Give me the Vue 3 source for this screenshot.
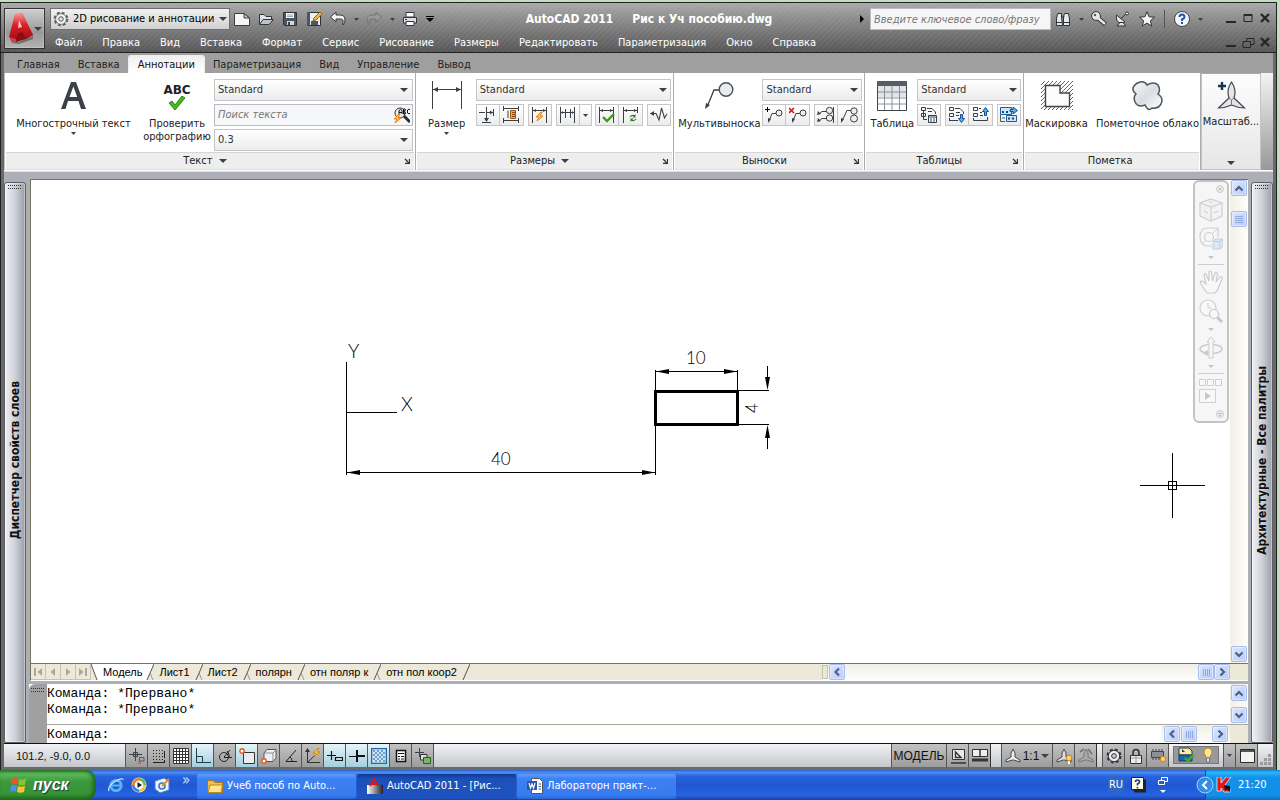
<script setup>
import { h, ref } from 'vue'

const D = '#3b3f46'
const line = (d, c = D, w = 1) => `<path d="${d}" fill="none" stroke="${c}" stroke-width="${w}"/>`
const fill = (d, f, s = 'none', w = 1) => `<path d="${d}" fill="${f}" stroke="${s}" stroke-width="${w}"/>`
const bolt = (x, y) => `<path transform="translate(${x} ${y})" d="M5 0L0 5H3L1 9L7 4H4L6 0Z" fill="#ffd23a" stroke="#e0761c" stroke-width=".9"/>`
const trefoil = 'M8 1L10 5V9L15 12V14L8.500 12H7.500L1 14V12L6 9V5Z'
const gear = '<circle cx="8" cy="8" r="6.200" fill="none" stroke="#33373d" stroke-width="2.600" stroke-dasharray="2.900 1.970"/><circle cx="8" cy="8" r="5.600" fill="#f1f1f1" stroke="#33373d"/><circle cx="8" cy="8" r="2.400" fill="#c9c9c9" stroke="#33373d"/>'

const icons = {
  logo: '<defs><linearGradient id="lg" x1="0" y1="0" x2="0" y2="1"><stop offset="0" stop-color="#f7989a"/><stop offset=".45" stop-color="#e01f26"/><stop offset="1" stop-color="#a50d14"/></linearGradient></defs>' +
    '<path d="M1 27L9 30L24 24V27L10 32L3 31Z" fill="#444" opacity=".55"/><path d="M1 25L6 3L13 1L24 23L17 27L7 30L1 27Z" fill="#8d0d13"/><path d="M0 25L6 2L13 1L24 23L16 26L14 20L9 21L7 27Z" fill="url(#lg)"/><path d="M10 8L13 15L9 16Z" fill="#f3c9ca"/><path d="M0 25L7 27L7 30L2 28Z" fill="#e8383e"/>',
  gearw: '<circle cx="8" cy="8" r="6.300" fill="none" stroke="#5b5f65" stroke-width="2.200" stroke-dasharray="2.800 2.150"/><circle cx="8" cy="8" r="5.400" fill="#f2f2f2" stroke="#5b5f65" stroke-width=".8"/><circle cx="8" cy="8" r="2.300" fill="#ddd" stroke="#5b5f65"/>',
  gear,
  page: fill('M.5 2.500H10L15.500 7V14.500H.5Z', '#f6f7f9', '#3a3d43') + fill('M10 2.500V7H15.500Z', '#c6cbd2', '#3a3d43'),
  open: fill('M1.500 13V3.500H6L8 5.500H13.500V8', '#dfe2e6', '#32363c') + fill('M1.500 13.500L5 8.500H15.500L11 13.500Z', '#bdc3cb', '#32363c'),
  save: fill('M1.500 1.500H14.500V14.500H2.500L1.500 13.500Z', '#4c5561', '#2d3138') + fill('M4 2H12V7H4Z', '#f4f6f8') + line('M5 4H11M5 5.500H11', '#9aa') + fill('M5 10H12V14H5Z', '#d3d8de') + fill('M6 11H8V14H6Z', '#39404a'),
  saveas: fill('M1.500 1.500H14.500V14.500H2.500L1.500 13.500Z', '#eceef1', '#2d3138') + fill('M1 1H4V15H1Z', '#4c5561') + fill('M5 10H12V14H5Z', '#4c5561') + fill('M7 10L8 7L14 1L16 3L10 9Z', '#f6b73c', '#9a6216'),
  undo: fill('M.5 6L6 1V4H10Q15 4 15 9Q15 12 13 14V9Q12 8 10 8H6V11Z', '#f0f1f3', '#34383e'),
  redo: fill('M15.500 6L10 1V4H6Q1 4 1 9Q1 12 3 14V9Q4 8 6 8H10V11Z', '#9a9a9a', '#747474'),
  print: fill('M4 1.500H12V6H4Z', '#fff', '#33373d') + fill('M1.500 6.500H14.500V12H1.500Z', '#dcdfe3', '#33373d') + fill('M4 10.500H12V14.500H4Z', '#fff', '#33373d') + line('M3 8.500H5', '#333'),
  binoc: fill('M2.500 2.500H6.500V6L7.500 14.500H1.500V8Z', '#e6e9ec', '#30343a') + fill('M9.500 2.500H13.500L14.500 8V14.500H8.500V6Z', '#e6e9ec', '#30343a') + line('M1.500 11.500H7M9 11.500H14.500M6.500 6H9.500', '#30343a'),
  key: line('M7 7L14.500 13.500', '#2e3238', 4.500) + '<circle cx="5" cy="5" r="4.400" fill="#e5e8eb" stroke="#2e3238"/><circle cx="4" cy="4" r="1.200" fill="#555"/>' + line('M7 7L14 13', '#e5e8eb', 2.500),
  dish: fill('M1.500 4L10 11Q4 13.500 2 9.500Q1 7 1.500 4Z', '#e5e8eb', '#2e3238') + line('M6 7.500L12 2', '#2e3238') + '<circle cx="12" cy="2.500" r="1.500" fill="#fff" stroke="#2e3238"/>' + fill('M5 11.500L8 11.500L11 15H2Z', '#ddd', '#2e3238'),
  star: fill('M8 .7L10.100 5.800L15.500 6.200L11.400 9.700L12.700 15L8 12.100L3.300 15L4.600 9.700L.5 6.200L5.900 5.800Z', '#f3f4f6', '#2c3036'),
  help: '<circle cx="8" cy="8" r="7.500" fill="#f4f6fa" stroke="#40444a"/>' + line('M5.500 6Q5.500 3.500 8 3.500Q10.500 3.500 10.500 6Q10.500 7.500 8 8.500V10', '#2555b0', 2) + fill('M7 11H9V13H7Z', '#2555b0'),
  min: line('M2 10H12', '#24272b', 2),
  max: line('M3 2.500H11V9.500H3ZM3 3.500H11', '#24272b'),
  restore: line('M5.500 5V2.500H13V8.500H9.500M2 5.500H9.500V11.500H2Z', '#24272b'),
  close: line('M3 2L11 10M11 2L3 10', '#24272b', 2.400),
  drop: fill('M0 0H8L4 4Z', D),
  dropS: fill('M0 0H5L2.500 3Z', D),
  bigA: fill('M1 28L11 1H16L26 28H21L18.500 20H8L5.500 28ZM9.500 16H17.200L13.400 5.500Z', '#3c4047').replace('<path', '<path fill-rule="evenodd"'),
  check: fill('M1 7L4 5L7 9L14 0L17 2L7 14Z', '#45b91b', '#2b8a10'),
  find: '<circle cx="6" cy="6" r="5" fill="#e6eef2" stroke="#333"/>' + line('M10 9L16 15', '#2a2a2a', 3) + line('M5 7V3.500L6.500 2.500L8 3.500V7M5 5.500H8M9.500 2V7H11L11.500 6L10.500 4.500L11.500 3L11 2ZM16 3L15 2L13.500 3V6L15 7L16 6', '#111') + bolt(0, 7),
  launch: line('M1 1L5 5M5.500 1V5.500H1', '#333', 1.400),
  dimBig: line('M1.500 0V28M30.500 0V28M2 8.500H30') + fill('M2 8.500L7 6V11ZM30 8.500L25 6V11Z', D),
  dimA: line('M0 6.500H6M7.500 1V15M8 6.500H14M14.500 3V10M3 16.500H12') + fill('M7.500 16L5 12H10ZM14 6.500L11 4.500V8.500Z', D),
  dimB: line('M1.500 0V5M16.500 0V5M1.500 12V17M16.500 12V17M2 2.500H16M2 14.500H16M6 4.500V12') + fill('M8.500 4.500H13.500V12.500H8.500Z', '#f3b21b', '#a15a0d') + line('M10 6.500H13M10 8.500H13M10 10.500H13', '#8b4507'),
  dimC: line('M1.500 1V17M15.500 1V17M2 4.500H15') + fill('M2 4.500L5 3V6ZM15 4.500L12 3V6Z', D) + bolt(5, 6),
  dimD: line('M1.500 1V17M6.500 3V12M11.500 3V12M15.500 1V17M2 6.500H15') + fill('M2 6.500L4 5V8ZM15 6.500L13 5V8Z', D),
  dimE: line('M1.500 1V17M15.500 1V17M2 4.500H15') + fill('M2 4.500L5 3V6ZM15 4.500L12 3V6Z', D) + line('M5 11L9 15L16 8', '#3a9b1f', 2.400),
  dimF: line('M1.500 1V17M15.500 1V7M2 4.500H15') + fill('M2 4.500L5 3V6ZM15 4.500L12 3V6Z', D) + line('M8 11Q10 8.500 13 10M14 13Q12 15.500 9 14', '#2e7d24', 1.200) + fill('M13.500 8V11.500H10.500ZM8.500 16V12.500H11.500Z', '#2e7d24'),
  jog: line('M0 7.500H6L9 14L11.500 2L14.500 12L17 8', D, 1.100) + fill('M0 7.500L4 5V10Z', D),
  leadBig: line('M3 26L10 9H17', D, 1.300) + fill('M1 28L2 22L6 24Z', D) + '<circle cx="22" cy="8.500" r="6.800" fill="#e8eaec" stroke="#4c5056" stroke-width="1.400"/>',
  leadAdd: line('M4 15L7 7.500H11') + fill('M3 17L3 12L6 13Z', D) + '<circle cx="14" cy="7" r="3" fill="#eee" stroke="#3b3f46"/>' + line('M0 3.500H5M2.500 1V6', '#000'),
  leadDel: line('M4 15L7 7.500H11') + fill('M3 17L3 12L6 13Z', D) + '<circle cx="14" cy="7" r="3" fill="#eee" stroke="#3b3f46"/>' + line('M0 2L5 7M5 2L0 7', '#d5161b', 1.600),
  leadAl: line('M2 8L5 5.500H9M2 15L5 12.500H9M16.500 1V17') + fill('M0 9L1 5L4 8ZM0 16L1 12L4 15Z', D) + '<circle cx="12.500" cy="4.500" r="3.200" fill="#eee" stroke="#3b3f46"/><circle cx="12.500" cy="12" r="3.200" fill="#eee" stroke="#3b3f46"/>',
  leadCol: line('M1 15L6 4.500H10') + fill('M0 17L0 12L3 13Z', D) + '<circle cx="13" cy="5" r="3.200" fill="#eee" stroke="#3b3f46"/><circle cx="13" cy="12.500" r="3.500" fill="#eee" stroke="#3b3f46"/>',
  table: fill('M.5 .5H29.500V29.500H.5Z', '#fff', '#41464e') + fill('M1 5H29V16H1Z', '#e1e4e8') + fill('M0 0H30V5H0Z', '#555d69') + line('M7.500 5V29M15 5V29M22.500 5V29M1 11H29M1 17H29M1 23H29', '#8c9096'),
  tabA: line('M1.500 1.500H5.500V4.500H1.500ZM3.500 4.500V13.500H7M1.500 7.500H5.500V10.500H1.500ZM7 2.500H12L15.500 6V8M8 5.500H12', '#33404d') + fill('M8.500 9.500H16.500V16.500H8.500Z', '#fff', '#33404d') + line('M9 11H16M10 13H12M13 13H15M10 15H12M13 15H15', '#33404d'),
  tabB: line('M1.500 1.500H5.500V4.500H1.500ZM1.500 7.500H5.500V10.500H1.500ZM7 2.500H12L15.500 6V8M1.500 14.500H10M8 6.500H12M8 9.500H11M1.500 12V15', '#33404d') + fill('M12.500 8.500H14.500V12.500H16.500L13.500 16.500L10.500 12.500H12.500Z', '#58b0ee', '#0f4f91'),
  tabC: line('M1.500 1.500H5.500V4.500H1.500ZM1.500 7.500H5.500V10.500H1.500ZM7 2.500H9M15.500 11V14.500H1.500V12M8 6.500H10M8 9.500H11', '#33404d') + fill('M12.500 9.500H14.500V5.500H16.500L13.500 1.500L10.500 5.500H12.500Z', '#58b0ee', '#0f4f91'),
  tabD: fill('M.5 1.500H11.500V8.500H.5Z', '#cfe4f6', '#1d5f9d') + fill('M10 3.500H13V1L17.500 4.500L13 8V5.500H10Z', '#58b0ee', '#0f4f91') + line('M.5 9V15.500H5M2 12H5', '#555') + fill('M6.500 9.500H16.500V15.500H6.500Z', '#cfe4f6', '#1d5f9d') + line('M2 6H4M6 6H8M8 12.500H10M12 12.500H14', '#0b4a8a', 2),
  mask: '<defs><pattern id="ht" width="4" height="4" patternUnits="userSpaceOnUse"><path d="M-1 5L5 -1" stroke="#666" stroke-width="1"/></pattern></defs><path d="M0 0H32V29H0Z" fill="url(#ht)"/>' + fill('M4.500 4.500H19V12H28.500V25.500H4.500Z', '#fdfdfe', '#42464d', 1.400),
  cloud: '<defs><linearGradient id="cg" x1="0" y1="0" x2="1" y2="1"><stop offset="0" stop-color="#f5f6f8"/><stop offset=".5" stop-color="#d9dde2"/><stop offset="1" stop-color="#fff"/></linearGradient></defs>' + fill('M8 1Q13 0 15 4Q22 0 26 4Q29 9 26 13Q32 17 29 23Q26 28 20 27Q16 31 13 24Q6 27 3 21Q1 16 4 13Q-1 9 2 5Q4 2 8 1Z', 'url(#cg)', '#50545b', 1.500),
  scale: fill('M14.500 2Q20 10 17 18L27.500 28Q21 28 14.500 25Q8 28 1.500 28L12 18Q9 10 14.500 2Z', '#e3e6e9', '#44484e', 1.200) + line('M12 18L14.500 20L17 18M14.500 20V25', '#777') + line('M1 6H9M5 2V10', '#123458', 2.400),
  cross: line('M0 6.500H13M6.500 0V13') + fill('M4.500 4.500H8.500V8.500H4.500Z', 'none', D) + line('M10.500 9V16M11 9.500H15V13H11', '#2b65a5') + '<circle cx="10.500" cy="15" r="1.500" fill="#d63"/>',
  snap: line('M2 2.500H12M2 5.500H12M2 8.500H12M2 11.500H12', '#222', 1).replace('<path', '<path stroke-dasharray="1 2"') + line('M13.500 3V10M2 14.500H14M13.500 12V14', '#222'),
  grid: fill('M0 0H16V16H0Z', '#fff') + line('M.5 .5H15.500V15.500H.5ZM3.500 0V16M6.500 0V16M9.500 0V16M12.500 0V16M0 3.500H16M0 6.500H16M0 9.500H16M0 12.500H16', '#333'),
  ortho: line('M1.500 0V14.500H16M1.500 8.500H7.500V14', '#1e3c50'),
  polar: '<circle cx="7" cy="9" r="4.500" fill="none" stroke="#222"/>' + line('M7 9.500H15M7 9L13 2M10 3Q13 6 12 10', '#222'),
  osnap: fill('M4.500 4.500H15.500V15.500H4.500Z', '#e9edf1', '#333') + '<circle cx="3" cy="3" r="2.200" fill="#fff" stroke="#e0571a" stroke-width="1.400"/>',
  osnap3: fill('M3 5L6 1.500H15V10L12 13.500H3Z', '#eff0f3', '#50545c') + line('M3 5H12V13M12 5L15 2', '#8a8e96') + '<circle cx="3" cy="13" r="2.200" fill="#fff" stroke="#e0571a" stroke-width="1.400"/>',
  angle: line('M13 2L3 13.500H14M7 9Q9 10 9 13', '#222'),
  ducs: line('M2.500 2V14.500H15M2.500 14.500L9 8', '#333') + fill('M0 4L2.500 0L5 4Z', '#333') + bolt(8, 0),
  dyn: line('M0 7.500H9M4.500 3V12M8.500 9.500H15.500V12.500H8.500Z', '#111', 1.200),
  lwt: line('M0 8.500H8', '#111', 1) + line('M8 8H16M8 2V14', '#111', 2),
  transp: fill('M.5 .5H15.500V15.500H.5Z', '#cfe3f3', '#2768a4', 1.500) + line('M2 3H14M2 7H14M2 11H14', '#6ba3cd', 2).replace('<path', '<path stroke-dasharray="2 2"') + line('M4 5H14M4 9H14M4 13H14', '#6ba3cd', 2).replace('<path', '<path stroke-dasharray="2 2"'),
  qp: fill('M3.500 2.500H12.500V13.500H3.500Z', '#fff', '#111', 1.500) + line('M5 5.500H11M5 8.500H7M8 8.500H11M5 11H7M8 11H11', '#111'),
  selcyc: line('M0 4.500H9M4.500 0V9') + fill('M5.500 6.500H12V12H5.500Z', '#ddd', '#333') + fill('M8.500 9.500H15.500V15.500H8.500Z', '#79b567', '#2c5e22'),
  model: fill('M2.500 1.500H14.500V11.500H2.500Z', '#e9e9e9', '#333') + line('M5.500 4V9.500H11ZM1 15H16', '#333', 1.400),
  layout: fill('M.5 1.500H8V8.500H.5ZM8 1.500H15.500V8.500H8Z', '#eee', '#333') + line('M0 12H16', '#333', 3),
  tre: fill(trefoil, '#e9eaec', '#44484d'),
  treb: fill(trefoil, '#dcdde0', '#44484d') + '<circle cx="13" cy="10" r="2.800" fill="#ffd76a" stroke="#dd7a16"/><path d="M12 13H14V16H12Z" fill="#fff"/>',
  treg: fill(trefoil, '#a9a9a9', '#777') + line('M2 4L6 1M10 1L14 6', '#777', 2),
  lock: line('M5 8V5Q5 1.500 8 1.500Q11 1.500 11 5V8', '#2f3338', 1.600) + fill('M2.500 7.500H13.500V15.500H2.500Z', '#eceded', '#2f3338') + line('M3 10H13M8 8V15', '#999'),
  chip: fill('M1.500 3.500H13.500V9.500H1.500Z', '#8b9096', '#41454a') + line('M3 1V3M6 1V3M9 1V3M12 1V3M3 10V12M6 10V12M9 10V12', '#41454a') + '<circle cx="13" cy="11" r="2.600" fill="#ffd76a" stroke="#dd7a16"/>',
  drawchk: fill('M1 1H11L14 4V8H1Z', '#ffe9a0', '#173b66') + fill('M1 8H14V14H1Z', '#1e62ad', '#173b66') + fill('M4 2L7 5H4Z', '#173b66') + line('M7 11L10 14L16 7', '#40ae22', 2.400),
  bulb: fill('M8 1Q12 1 12 5Q12 7 10 9V11H6V9Q4 7 4 5Q4 1 8 1Z', '#ffe79a', '#b98a31') + fill('M6.500 11H9.500V15H6.500Z', '#e8e8e8', '#777'),
  clean: fill('M1.500 1.500H15.500V14.500H1.500Z', '#f4f4f4', '#2a2a2a') + fill('M2 2H15V4H2Z', '#555'),
  flag: fill('M2 3Q5 1 8 2.500L7 8.500Q4 7 1 9Z', '#f0532a') + fill('M9 3Q12 4.500 16 2.500L15 9Q11 10 8 8.500Z', '#83c532') + fill('M1 10Q4 8 7 9.500L6 16Q3 14 0 16Z', '#4b92ee') + fill('M8 10Q11 11.500 15 10L14 16Q10 17.500 7 16Z', '#fcc52d'),
  ie: '<circle cx="8" cy="8.500" r="5.200" fill="none" stroke="#57b4f7" stroke-width="2.800"/>' + line('M4 8.500H13', '#57b4f7', 2) + line('M1 14Q-1 10 7 4.500Q15 0 15 3', '#bfe3ff', 1.300),
  media: '<circle cx="8" cy="8" r="7.500" fill="#f3f4f7"/><path d="M8 1A7 7 0 0 0 1 8H8Z" fill="#ef7a26"/><path d="M8 1A7 7 0 0 1 15 8H8Z" fill="#69b545"/><path d="M8 15A7 7 0 0 1 1 8H8Z" fill="#3d7fd6"/><path d="M8 15A7 7 0 0 0 15 8H8Z" fill="#f5c52f"/><circle cx="8" cy="8" r="4.400" fill="#fff"/><path d="M6.500 5L11 8L6.500 11Z" fill="#222"/>',
  desk: fill('M1 4L10 1L15 4V13L6 16L1 12Z', '#eaf4ff', '#3e7fc4') + '<circle cx="8" cy="9" r="3" fill="none" stroke="#2c7bd0" stroke-width="1.600"/>' + line('M8 9L15 2', '#e08b2b', 2),
  folder: fill('M.5 2.500H6L8 4.500H15.500V14.500H.5Z', '#f0c04a', '#a9781a') + fill('M1 14.500L3 7H15.500L14 14.500Z', '#ffe58c', '#b98a22'),
  acad: '<defs><linearGradient id="ag" x1="0" y1="0" x2="1" y2="0"><stop offset="0" stop-color="#fff"/><stop offset="1" stop-color="#222"/></linearGradient></defs><path d="M0 7H16V16H0Z" fill="url(#ag)"/>' + line('M3 8L7 1L11 8M5 6H9', '#e3131b', 2),
  word: fill('M6.500 .5H12.500L15.500 3.500V15.500H4.500V.5Z', '#fff', '#555') + fill('M0 3H10V12H0Z', '#2b55a6') + line('M2 5L3.500 10L5 6L6.500 10L8 5', '#fff', 1.200) + line('M11.500 6H14M11.500 8.500H14M11.500 11H14', '#557'),
  hlp: fill('M2 2.500H15V15.500H4L2 13Z', '#222') + fill('M.5 .5H12.500V12.500H.5Z', '#fffbe6', '#222') + line('M4.500 5Q4.500 3 6.500 3Q8.500 3 8.500 5Q8.500 6 6.500 7V8.500M6.500 10V11.500', '#1c3f8f', 1.700),
  kas: fill('M1 0H5V6L10 0H15L9 8L14 12V15H8L5 11V14H1Z', '#e01818', '#fff', .7) + fill('M8 8L14 9V15L11 12L9 14Z', '#111'),
  first: line('M3.500 3V11M4.500 3V11', '#aca899') + fill('M11 3V11L6.500 7Z', '#aca899'),
  prev: fill('M9 3V11L4.500 7Z', '#aca899'),
  next: fill('M5 3V11L9.500 7Z', '#aca899'),
  last: line('M9.500 3V11M10.500 3V11', '#aca899') + fill('M3 3V11L7.500 7Z', '#aca899'),
  up: line('M3.500 9.500L7 6L10.500 9.500', '#4d6185', 2.200),
  down: line('M3.500 5.500L7 9L10.500 5.500', '#4d6185', 2.200),
  left: line('M9 3.500L5.500 7L9 10.500', '#4d6185', 2.200),
  right: line('M5.500 3.500L9 7L5.500 10.500', '#4d6185', 2.200),
  thV: line('M3 4.500H11M3 6.500H11M3 8.500H11M3 10.500H11', '#8ea8e0'),
  thH: line('M4.500 4V11M6.500 4V11M8.500 4V11M10.500 4V11', '#8ea8e0'),
  ncube: fill('M12 1L23 5V18L12 23L1 18V5Z', '#f2f2f2', '#cfcfcf', 1.200) + line('M1 5L12 9L23 5M12 9V23M5 13L9 15M15 15L19 13M10 4H14', '#cfcfcf', 1.200),
  nwheel: line('M9 1H19V10M13 19H9Q1 19 1 10Q1 1 9 1', '#cfcfcf', 1.200) + '<circle cx="10" cy="10" r="4.500" fill="none" stroke="#cfcfcf" stroke-width="1.200"/><path d="M6.500 13.500L3.500 16.500M14 6L18 2" stroke="#cfcfcf"/>' + fill('M14 14.500L17 12H24V19L21 22H14Z', '#dce8f2', '#bcd0e2') + line('M14 14.500H21V22M21 14.500L24 12', '#bcd0e2'),
  nhand: fill('M8 23L2 14Q0 11 3 11L7 14L5 5Q5 3 7 4L10 11L10 2Q11 0 12.500 2L13.500 11L16 3Q18 1 18.500 4L17 12L21 7Q24 6 23 9L18 21L16 23Z', '#f8f8f8', '#cbcbcb', 1.200),
  nzoom: '<circle cx="9" cy="9" r="8" fill="#f8f8f8" stroke="#cfcfcf" stroke-width="1.200"/><path d="M9 4V9H13" fill="none" stroke="#cfcfcf"/><circle cx="15" cy="15" r="4.500" fill="#f8f8f8" stroke="#c6c6c6" stroke-width="1.200"/>' + line('M18.500 18.500L23 23', '#c6c6c6', 3),
  norbit: '<ellipse cx="12" cy="13" rx="11" ry="4.500" fill="none" stroke="#cdcdcd" stroke-width="1.500"/>' + fill('M10 22V6H8L12 1L16 6H14V22Z', '#f8f8f8', '#cbcbcb') + fill('M9 14V20L3 17Z', '#cbcbcb'),
  nmotion: fill('M.5 .5H6.500V6.500H.5ZM8.500 .5H14.500V6.500H8.500ZM16.500 .5H22.500V6.500H16.500ZM.5 10.500H16.500V23.500H.5Z', '#f8f8f8', '#cfcfcf') + fill('M6 13V21L12 17Z', '#c9c9c9'),
  ndot: '<circle cx="4" cy="4" r="3.500" fill="#eee" stroke="#ccc"/>' + line('M2.500 2.500L5.500 5.500M5.500 2.500L2.500 5.500', '#bbb'),
  nmenu: '<circle cx="4" cy="4" r="3.500" fill="#eee" stroke="#ccc"/>' + line('M2 3.500H6', '#bbb') + fill('M2.500 5H5.500L4 6.500Z', '#bbb'),
  ndrop: fill('M0 0H6L3 3Z', '#c4c4c4')
}

const Ico = (p) => h('svg', { width: p.w, height: p.h, viewBox: `0 0 ${p.w} ${p.h}`, 'aria-hidden': 'true', innerHTML: icons[p.n] })
Ico.props = { n: String, w: { default: 16 }, h: { default: 16 } }

const menus = ['Файл', 'Правка', 'Вид', 'Вставка', 'Формат', 'Сервис', 'Рисование', 'Размеры', 'Редактировать', 'Параметризация', 'Окно', 'Справка']
const ribbonTabs = ['Главная', 'Вставка', 'Аннотации', 'Параметризация', 'Вид', 'Управление', 'Вывод']
const sheets = ['Модель', 'Лист1', 'Лист2', 'полярн', 'отн поляр к', 'отн пол коор2']
const modes = [['cross'], ['snap'], ['grid'], ['ortho', 1], ['polar'], ['osnap', 1], ['osnap3'], ['angle'], ['ducs'], ['dyn', 1], ['lwt', 1], ['transp', 1], ['qp'], ['selcyc']]
const tasks = [['folder', 'Учеб пособ по Auto...'], ['acad', 'AutoCAD 2011 - [Рис...'], ['word', 'Лабораторн практ-...']]
const query = ref('')
const find = ref('')
const command = ref('')
</script>

<template>
  <div class="desktop">
    <div class="window">
      <header class="head">
        <button class="app" aria-label="Меню приложения"><Ico n="logo" :w="25" :h="33" /><Ico n="drop" :w="8" :h="4" /></button>
        <div class="rows">
          <div class="quick">
            <label class="combo space"><Ico n="gearw" /><select aria-label="Рабочее пространство"><option>2D рисование и аннотации</option></select><Ico class="arr" n="drop" :w="8" :h="4" /></label>
            <button v-for="n in ['page', 'open', 'save', 'saveas', 'undo']" :key="n" class="tool" :aria-label="n"><Ico :n="n" /></button>
            <button class="mini" aria-label="undo list"><Ico n="dropS" :w="5" :h="3" /></button>
            <button class="tool" aria-label="redo"><Ico n="redo" /></button>
            <button class="mini" aria-label="redo list"><Ico n="dropS" :w="5" :h="3" /></button>
            <button class="tool" aria-label="print"><Ico n="print" /></button>
            <button class="mini more" aria-label="more"><svg width="8" height="6"><path d="M0 0H8V1H0ZM0 2H8L4 6Z" /></svg></button>
            <h1><span>AutoCAD 2011</span><span>Рис к Уч пособию.dwg</span></h1>
            <svg class="play" width="4" height="8"><path d="M0 0L4 4L0 8Z" /></svg>
            <input v-model="query" class="search" aria-label="Поиск" placeholder="Введите ключевое слово/фразу">
            <button class="tool" aria-label="find"><Ico n="binoc" /></button>
            <button class="mini" aria-label="find list"><Ico n="dropS" :w="5" :h="3" /></button>
            <button v-for="n in ['key', 'dish', 'star']" :key="n" class="tool" :aria-label="n"><Ico :n="n" /></button>
            <i class="bar"></i>
            <button class="tool" aria-label="help"><Ico n="help" /></button>
            <button class="mini" aria-label="help list"><Ico n="dropS" :w="5" :h="3" /></button>
            <div class="wins"><button v-for="n in ['min', 'max', 'close']" :key="n" :aria-label="n"><Ico :n="n" :w="14" :h="14" /></button></div>
          </div>
          <div class="menurow">
            <nav class="menu"><button v-for="m in menus" :key="m">{{ m }}</button></nav>
            <div class="wins"><button v-for="n in ['min', 'restore', 'close']" :key="n" :aria-label="n"><Ico :n="n" :w="14" :h="14" /></button></div>
          </div>
        </div>
      </header>

      <main class="frame">
        <nav class="rtabs"><button v-for="t in ribbonTabs" :key="t" :class="{ on: t === 'Аннотации' }">{{ t }}</button></nav>

        <section class="ribbon">
          <div class="panel">
            <div class="pbody">
              <button class="big mtext"><Ico n="bigA" :w="27" :h="30" /><span>Многострочный текст</span><Ico n="dropS" :w="5" :h="3" /></button>
              <button class="big spell"><b>ABC</b><Ico n="check" :w="18" :h="15" /><span>Проверить<br>орфографию</span></button>
              <div class="stack">
                <label class="combo"><select aria-label="Стиль текста"><option>Standard</option></select><Ico class="arr" n="drop" :w="8" :h="4" /></label>
                <div class="findbox"><input v-model="find" aria-label="Поиск текста" placeholder="Поиск текста"><button aria-label="Найти"><Ico n="find" /></button></div>
                <label class="combo"><select aria-label="Высота текста"><option>0.3</option></select><Ico class="arr" n="drop" :w="8" :h="4" /></label>
              </div>
            </div>
            <footer><span>Текст <Ico n="drop" :w="8" :h="4" /></span><Ico n="launch" :w="6" :h="6" /></footer>
          </div>

          <div class="panel">
            <div class="pbody">
              <button class="big dim"><Ico n="dimBig" :w="32" :h="30" /><span>Размер</span><Ico n="dropS" :w="5" :h="3" /></button>
              <div class="stack">
                <label class="combo"><select aria-label="Размерный стиль"><option>Standard</option></select><Ico class="arr" n="drop" :w="8" :h="4" /></label>
                <div class="groups">
                  <div class="grp"><button aria-label="Разорвать"><Ico n="dimA" :w="18" :h="18" /></button><button aria-label="Смещение"><Ico n="dimB" :w="18" :h="18" /></button></div>
                  <div class="grp"><button aria-label="Быстрый"><Ico n="dimC" :w="18" :h="18" /></button></div>
                  <div class="grp"><button aria-label="Продолжить"><Ico n="dimD" :w="18" :h="18" /></button><button class="slim" aria-label="Список"><Ico n="dropS" :w="5" :h="3" /></button></div>
                  <div class="grp"><button aria-label="Контроль"><Ico n="dimE" :w="18" :h="18" /></button><button aria-label="Обновить"><Ico n="dimF" :w="18" :h="18" /></button></div>
                  <div class="grp"><button aria-label="Излом"><Ico n="jog" :w="18" :h="18" /></button></div>
                </div>
              </div>
            </div>
            <footer><span>Размеры <Ico n="drop" :w="8" :h="4" /></span><Ico n="launch" :w="6" :h="6" /></footer>
          </div>

          <div class="panel">
            <div class="pbody">
              <button class="big lead"><Ico n="leadBig" :w="30" :h="30" /><span>Мультивыноска</span></button>
              <div class="stack">
                <label class="combo"><select aria-label="Стиль выноски"><option>Standard</option></select><Ico class="arr" n="drop" :w="8" :h="4" /></label>
                <div class="groups">
                  <div class="grp"><button aria-label="Добавить"><Ico n="leadAdd" :w="18" :h="18" /></button><button aria-label="Удалить"><Ico n="leadDel" :w="18" :h="18" /></button></div>
                  <div class="grp"><button aria-label="Выровнять"><Ico n="leadAl" :w="18" :h="18" /></button><button aria-label="Собрать"><Ico n="leadCol" :w="18" :h="18" /></button></div>
                </div>
              </div>
            </div>
            <footer><span>Выноски</span><Ico n="launch" :w="6" :h="6" /></footer>
          </div>

          <div class="panel">
            <div class="pbody">
              <button class="big tbl"><Ico n="table" :w="30" :h="30" /><span>Таблица</span></button>
              <div class="stack">
                <label class="combo"><select aria-label="Стиль таблицы"><option>Standard</option></select><Ico class="arr" n="drop" :w="8" :h="4" /></label>
                <div class="groups">
                  <div class="grp"><button aria-label="Связь"><Ico n="tabA" :w="18" :h="18" /></button></div>
                  <div class="grp"><button aria-label="Загрузить"><Ico n="tabB" :w="18" :h="18" /></button><button aria-label="Выгрузить"><Ico n="tabC" :w="18" :h="18" /></button></div>
                  <div class="grp"><button aria-label="Извлечь"><Ico n="tabD" :w="18" :h="18" /></button></div>
                </div>
              </div>
            </div>
            <footer><span>Таблицы</span><Ico n="launch" :w="6" :h="6" /></footer>
          </div>

          <div class="panel">
            <div class="pbody marks">
              <button class="big"><Ico n="mask" :w="32" :h="30" /><span>Маскировка</span></button>
              <button class="big"><Ico n="cloud" :w="32" :h="30" /><span>Пометочное облако</span></button>
            </div>
            <footer><span>Пометка</span></footer>
          </div>

          <button class="scale"><Ico n="scale" :w="29" :h="30" /><span>Масштаб...</span><Ico n="drop" :w="8" :h="4" /></button>
          <div class="rest"></div>
        </section>

        <section class="work">
          <aside class="palette"><i class="grip"></i><span>Диспетчер свойств слоев</span></aside>

          <div class="centre">
            <div class="docwin">
              <div class="view">
                <svg class="drawing" width="100%" height="100%">
                  <g fill="none" stroke="#000" shape-rendering="crispEdges">
                    <path d="M315.500 182V295M316 232.500H366" />
                    <path d="M316 292.500H624M624.500 246V295M624.500 190V211M706.500 190V211M625 191.500H706M708 210.500H738M708 244.500H738M736.500 186V198M736.500 255V269" />
                    <path d="M624.500 211.500H706.500V244.500H624.500Z" stroke-width="3" />
                    <path d="M1109 305.500H1174M1141.500 273V338M1137.500 301.500H1145.500V309.500H1137.500Z" />
                  </g>
                  <path d="M316 292.500L329 290V295ZM624 292.500L611 290V295ZM625 191.500L638 189V194ZM706 191.500L693 189V194ZM736.500 210L734 197H739ZM736.500 245L734 258H739Z" />
                  <g class="cad">
                    <text x="460" y="285">40</text>
                    <text x="655" y="184">10</text>
                    <text transform="translate(727 233) rotate(-90)">4</text>
                    <text class="axis" x="317" y="178">Y</text>
                    <text class="axis" x="370" y="231">X</text>
                  </g>
                </svg>
                <div class="navbar">
                  <Ico class="end" n="ndot" :w="8" :h="8" />
                  <button aria-label="Видовой куб"><Ico n="ncube" :w="24" :h="24" /></button>
                  <button aria-label="Штурвал"><Ico n="nwheel" :w="24" :h="24" /></button>
                  <Ico n="ndrop" :w="6" :h="3" /><hr>
                  <button aria-label="Панорамирование"><Ico n="nhand" :w="24" :h="24" /></button>
                  <button aria-label="Зумирование"><Ico n="nzoom" :w="24" :h="24" /></button>
                  <Ico n="ndrop" :w="6" :h="3" />
                  <button aria-label="Орбита"><Ico n="norbit" :w="24" :h="24" /></button>
                  <Ico n="ndrop" :w="6" :h="3" /><hr>
                  <button aria-label="Аниматор"><Ico n="nmotion" :w="24" :h="24" /></button>
                  <Ico class="end last" n="nmenu" :w="8" :h="8" />
                </div>
              </div>
              <div class="vscroll"><button aria-label="Вверх"><Ico n="up" :w="14" :h="14" /></button><i class="thumb"><Ico n="thV" :w="14" :h="14" /></i><button class="tail" aria-label="Вниз"><Ico n="down" :w="14" :h="14" /></button></div>
              <div class="sheets">
                <button v-for="n in ['first', 'prev', 'next', 'last']" :key="n" class="go" :aria-label="n"><Ico :n="n" :w="14" :h="14" /></button>
                <svg width="8" height="16"><path d="M0 0L6 16H8V0Z" fill="#fff" /><path d="M0 0L6 16" stroke="#555" fill="none" /></svg>
                <template v-for="(s, i) in sheets" :key="s">
                  <button class="sheet" :class="{ on: !i }">{{ s }}</button>
                  <svg width="8" height="16"><path v-if="!i" d="M0 0H8L1 16H0Z" fill="#fff" /><path d="M8 0L1 16" stroke="#555" fill="none" /><path v-if="i < 5" d="M4 9L7 16" stroke="#999" fill="none" /></svg>
                </template>
                <div class="hscroll"><i class="split"></i><button aria-label="Влево"><Ico n="left" :w="14" :h="14" /></button><i class="thumb tail"><Ico n="thH" :w="14" :h="14" /></i><button aria-label="Вправо"><Ico n="right" :w="14" :h="14" /></button></div>
              </div>
            </div>

            <div class="cmd">
              <div class="cgrip"><i class="grip"></i></div>
              <div class="cmain">
                <div class="log"><div><p>Команда: *Прервано*</p><p>Команда: *Прервано*</p></div>
                  <div class="vscroll"><button aria-label="Вверх"><Ico n="up" :w="14" :h="14" /></button><button class="tail" aria-label="Вниз"><Ico n="down" :w="14" :h="14" /></button></div></div>
                <div class="entry"><label for="cmdline">Команда:</label><input id="cmdline" v-model="command">
                  <div class="hscroll"><button aria-label="Влево"><Ico n="left" :w="14" :h="14" /></button><i class="thumb"><Ico n="thH" :w="14" :h="14" /></i><button class="tail" aria-label="Вправо"><Ico n="right" :w="14" :h="14" /></button></div><i class="corner"></i></div>
              </div>
            </div>
          </div>

          <aside class="palette right"><i class="grip"></i><span>Архитектурные - Все палитры</span></aside>
        </section>

        <footer class="status">
          <span class="coords">101.2, -9.0, 0.0</span>
          <button v-for="m in modes" :key="m[0]" class="st" :class="{ on: m[1] }" :aria-label="m[0]"><Ico :n="m[0]" /></button>
          <span class="fillr"></span>
          <button class="st text">МОДЕЛЬ</button>
          <button v-for="n in ['model', 'layout']" :key="n" class="st" :aria-label="n"><Ico :n="n" /></button>
          <i class="gap"></i>
          <button class="st ann"><Ico n="tre" />1:1<Ico n="drop" :w="8" :h="4" /></button>
          <button v-for="n in ['treb', 'treg']" :key="n" class="st" :aria-label="n"><Ico :n="n" /></button>
          <i class="gap small"></i>
          <button v-for="n in ['gear', 'lock', 'chip']" :key="n" class="st" :aria-label="n"><Ico :n="n" /></button>
          <span class="tray"><span><Ico n="drawchk" /><Ico n="bulb" /></span></span>
          <button class="st slim" aria-label="menu"><Ico n="dropS" :w="5" :h="3" /></button>
          <button class="st" aria-label="clean"><Ico n="clean" /></button>
          <span class="size"><svg width="12" height="12"><path d="M8 0H11V3H8ZM4 4H7V7H4ZM8 4H11V7H8ZM0 8H3V11H0ZM4 8H7V11H4ZM8 8H11V11H8Z" fill="#9a9ca0" /></svg></span>
        </footer>
      </main>
    </div>

    <footer class="taskbar">
      <button class="start"><Ico n="flag" :w="17" :h="18" />пуск</button>
      <div class="ql"><button v-for="n in ['ie', 'media', 'desk']" :key="n" :aria-label="n"><Ico :n="n" /></button><span>»</span></div>
      <button v-for="(t, i) in tasks" :key="t[0]" class="task" :class="{ on: i === 1 }"><Ico :n="t[0]" />{{ t[1] }}</button>
      <div class="lang"><span>RU</span><Ico n="hlp" /><svg width="10" height="18"><path d="M3.500 4V1.500H9.500V5.500H7M.5 4.500H6.500V8.500H.5Z" fill="none" stroke="#fff" /><path d="M2 14H8L5 17Z" fill="#fff" /></svg></div>
      <div class="clock"><button aria-label="Показать значки"><svg width="18" height="18"><circle cx="9" cy="9" r="8" fill="#2f8ee8" stroke="#9fd3ff" /><path d="M11 5L7 9L11 13" fill="none" stroke="#fff" stroke-width="2" /></svg></button><Ico n="kas" /><time>21:20</time></div>
    </footer>
  </div>
</template>

<style>
body { margin: 0; }
</style>

<style scoped>
* { box-sizing: border-box; }
button, input, select { font: inherit; color: inherit; margin: 0; padding: 0; border: 0; background: none; appearance: none; border-radius: 0; outline: none; min-width: 0; }
svg { display: block; flex: none; }
i { font-style: normal; }
.desktop { display: flex; flex-direction: column; min-height: 100vh; padding-top: 2px; background: #c3ddc3; font: 11px/14px "DejaVu Sans Condensed", "Noto Sans", sans-serif; color: #222; white-space: nowrap; }
.window { flex: 1; display: flex; flex-direction: column; margin-right: 3px; border: 1px solid #222; border-bottom: 0; background: #6b6969; }

.head { display: flex; gap: 5px; height: 50px; padding: 5px 0 0 3px; border-bottom: 1px solid #222; background: repeating-linear-gradient(135deg, #ffffff0a 0 2px, #0000 2px 4px), linear-gradient(#aaa, #8a8a8a 35%, #565656); }
.app { display: flex; align-items: center; width: 41px; height: 41px; padding-left: 4px; border: 1px solid #333; background: linear-gradient(#d0d0d0, #999 60%, #b4b4b4); box-shadow: inset 0 0 0 1px #ffffff30; }
.rows { flex: 1; min-width: 0; }
.quick { display: flex; align-items: center; height: 22px; }
.combo { display: grid; grid-template-columns: 1fr 15px; align-items: center; height: 22px; border: 1px solid #c6c6c8; background: linear-gradient(#fff, #ececec); }
.combo select { grid-area: 1 / 1 / 2 / 3; padding-left: 3px; height: 20px; color: #333; }
.combo .arr { grid-area: 1 / 2; justify-self: center; pointer-events: none; }
.space { grid-template-columns: 20px 1fr 12px; width: 180px; padding-left: 2px; border-color: #6e6e6e; background: linear-gradient(#f2f2f2, #d0d0d0); }
.space select { grid-area: 1 / 2 / 2 / 4; padding: 0; color: #000; }
.space .arr { grid-area: 1 / 3; }
.tool { display: grid; place-items: center; width: 24px; height: 22px; flex: none; }
.mini { display: grid; place-items: center; width: 12px; height: 22px; flex: none; }
.more { width: 16px; }
h1 { flex: 1; display: flex; justify-content: center; gap: 19px; margin: 0; font-size: 12px; line-height: 14px; color: #fff; }
.play { margin-right: 6px; }
.search { width: 181px; height: 22px; padding: 0 3px; border: 1px solid #b9bcc6; background: #f6f6f6; }
::placeholder { font-style: italic; color: #777; opacity: 1; }
.bar { width: 1px; height: 18px; margin: 0 5px; background: #555; }
.wins { display: flex; gap: 3px; margin-left: auto; padding-right: 4px; }
.quick .wins { margin-left: 18px; }
.menurow { display: flex; align-items: center; height: 22px; padding-top: 4px; }
.menu { display: flex; padding-left: 5px; gap: 20px; color: #fff; }

.frame { flex: 1; display: flex; flex-direction: column; padding: 0 3px 3px; }
.rtabs { display: flex; height: 20px; padding: 3px 0 0 4px; background: #9f9f9f; }
.rtabs button { padding: 0 9px; border-radius: 2px 2px 0 0; }
.rtabs .on { background: linear-gradient(#f0f0f0, #fff); box-shadow: 0 0 0 1px #eee; color: #111; }
.ribbon { display: grid; grid-template-columns: 412fr 259fr 191fr 159fr 177fr 60fr 12fr; height: 99px; padding-bottom: 1px; background: #fff; border-bottom: 1px solid #ddd; }
.panel { display: flex; flex-direction: column; min-width: 0; border-right: 1px solid #aaacae; padding: 0 1px; }
.panel:first-child { border-left: 1px solid #bbb; }
.pbody { flex: 1; display: flex; padding: 6px 1px 0; }
.panel footer { display: flex; align-items: center; height: 18px; padding-right: 4px; border-top: 1px solid #d5d5d5; background: #eee; border-bottom: 1px solid #ddd; }
.panel footer span { flex: 1; display: flex; align-items: center; justify-content: center; gap: 6px; }
.big { display: flex; flex-direction: column; align-items: center; flex: 1; padding-top: 2px; line-height: 13px; }
.big span { margin-top: 6px; }
.big span + svg { margin-top: 2px; }
.marks { justify-content: space-between; padding: 6px 0 0; }
.marks .big { flex: none; }
.mtext { flex: 0 0 133px; }
.spell { flex: 0 0 74px; }
.spell b { font: bold 12px/12px "DejaVu Sans", sans-serif; margin-top: 3px; }
.stack { display: flex; flex-direction: column; gap: 3px; width: 199px; }
.dim { flex: 0 0 58px; }
.dim + .stack { width: 196px; }
.lead { flex: 0 0 86px; }
.lead + .stack { width: 100px; }
.tbl { flex: 0 0 50px; }
.tbl + .stack { width: 104px; }
.findbox { display: flex; align-items: center; height: 22px; padding-left: 3px; border: 1px solid #b9bcc6; background: #f6f7f8; }
.findbox input { flex: 1; }
.findbox button { width: 18px; }
.groups { display: flex; justify-content: space-between; }
.grp { display: flex; border: 1px solid #c6c6c8; background: linear-gradient(#fff, #ececec); height: 22px; }
.grp button { display: grid; place-items: center; width: 22px; }
.grp button + button { width: 24px; border-left: 1px solid #c6c6c8; }
.grp button + .slim { width: 12px; }
.scale { display: flex; flex-direction: column; align-items: center; padding: 6px 0 4px; border: 1px solid #c4c4c6; border-top-color: #aaa; background: linear-gradient(#fdfdfd, #e6e6e6); line-height: 13px; }
.scale span { margin-top: 5px; }
.scale span + svg { margin-top: auto; }
.rest { background: linear-gradient(#f4f4f4, #999); }

.work { flex: 1; display: flex; gap: 3px; padding: 7px 0 0; background: #acafb6; }
.palette { display: flex; flex-direction: column; align-items: center; width: 22px; margin-top: 3px; padding-bottom: 10px; border: 1px solid #5c5f66; border-radius: 3px 3px 2px 2px; background: linear-gradient(90deg, #f0f1f6, #cfd1d8 50%, #9b9ea5); box-shadow: inset 0 0 0 1px #ffffff60; }
.palette span { margin: auto; writing-mode: vertical-rl; transform: rotate(180deg); font-size: 12px; font-weight: bold; color: #111; }
.palette .grip { margin-top: 2px; }
.grip { display: block; width: 14px; height: 4px; background: repeating-linear-gradient(90deg, #333 0 1px, #0000 1px 2px) 0 0 / 14px 1px repeat-x, repeating-linear-gradient(90deg, #333 0 1px, #0000 1px 2px) 0 3px / 14px 1px repeat-x; }
.centre { flex: 1; min-width: 0; display: flex; flex-direction: column; gap: 3px; }
.docwin { flex: 1; display: grid; grid-template: 1fr 17px / 1fr 18px; margin-left: 1px; border-top: 1px solid #77735f; border-left: 1px solid #77735f; border-bottom: 1px solid #fff; background: #fff; }
.view { position: relative; background: #fff; }
.drawing { position: absolute; inset: 0; }
.cad { font: 300 17px Lato, "Liberation Sans", sans-serif; }
.axis { font-size: 19px; }
.navbar { position: absolute; top: 0; right: 1px; display: flex; flex-direction: column; align-items: center; gap: 5px; width: 36px; height: 243px; padding: 3px 3px; border: 2px solid #c3c3c3; border-radius: 6px; background: #f6f6f6; }
.navbar button { height: 24px; }
.navbar .end { align-self: flex-end; }
.navbar .last { margin-top: auto; }
.navbar hr { width: 26px; height: 1px; margin: 0; border: 0; background: #cfcfcf; }
.vscroll { display: flex; flex-direction: column; align-items: center; background: linear-gradient(90deg, #f1efe6, #fefefb); }
.vscroll button, .hscroll button, .thumb { display: grid; place-items: center; width: 16px; height: 16px; flex: none; border: 1px solid #a7bdf0; border-radius: 2px; background: linear-gradient(135deg, #dce6fe, #b7cbfa); box-shadow: inset 0 0 0 1px #ffffff70; }
.vscroll .thumb { margin-top: 15px; }
.vscroll .tail { margin-top: auto; }
.docwin > .vscroll .tail { margin-bottom: 1px; }
.sheets { grid-column: 1 / 3; display: flex; border-top: 1px solid #77735f; background: #ece9d8; font: 11px/16px "Liberation Sans", sans-serif; color: #000; padding-right: 18px; }
.go { width: 15px; border-right: 1px solid #c5c2b2; border-bottom: 1px solid #c5c2b2; }
.sheet { padding: 0 5px; }
.sheet.on { padding: 0 4px; background: #fff; }
.hscroll { display: flex; align-items: center; background: linear-gradient(#f1efe6, #fefefb); }
.sheets .hscroll { flex: 0 1 408px; margin-left: auto; }
.split { width: 6px; height: 14px; margin-right: 1px; border: 1px solid #c5c2b2; background: #ece9d8; }
.hscroll .tail { margin-left: auto; }
.cmd { display: flex; height: 59px; background: #fff; }
.cgrip { width: 18px; padding: 4px 2px; background: #a0a0a0; border-radius: 6px 0 0 0; }
.cmain { flex: 1; display: flex; flex-direction: column; font: 13px/16px "Liberation Mono", monospace; color: #000; }
.log { flex: 1; display: flex; justify-content: space-between; }
.log > div:first-child { padding-top: 2px; }
.log p { margin: 0; }
.log .vscroll { width: 18px; padding: 1px 0; }
.entry { display: flex; height: 19px; border-top: 1px solid #a8a799; line-height: 20px; }
.entry input { flex: 1; }
.entry .hscroll { width: 69px; padding: 0 2px 0 3px; }
.entry .hscroll .thumb { margin-left: 1px; }
.corner { width: 18px; background: #ece9d8; }

.status { display: flex; height: 24px; border-top: 1px solid #111; background: linear-gradient(#f2f3f7, #c3c6ca); font: 11px/20px "Liberation Sans", sans-serif; color: #111; }
.coords { width: 121px; padding-left: 12px; line-height: 24px; }
.st { display: grid; place-items: center; width: 22px; flex: none; border-left: 1px solid #555; background: linear-gradient(#c2c2c2, #9c9c9c); }
.st.on { background: linear-gradient(#e6f5f9, #a3cfdc); }
.fillr { flex: 1; border-left: 1px solid #555; }
.st.text { width: 55px; font-size: 12px; }
.gap { width: 11px; border-left: 1px solid #333; }
.gap.small { width: 6px; }
.st.ann { display: flex; align-items: center; justify-content: center; gap: 2px; width: 51px; font-size: 12px; }
.tray { width: 55px; padding: 2px 4px; border-left: 1px solid #555; }
.tray span { display: flex; gap: 6px; align-items: center; height: 18px; padding-left: 4px; background: #999; border: 1px solid #777; }
.st.slim { width: 12px; }
.size { display: flex; align-items: flex-end; justify-content: flex-end; width: 16px; padding: 1px; border-left: 1px solid #555; }

.taskbar { display: flex; align-items: center; height: 30px; background: linear-gradient(#2c62c8, #4b8df5 8%, #2a63df 20%, #2158d2 50%, #2662e2 85%, #1941a5); font-size: 11px; color: #fff; }
.start { display: flex; align-items: center; gap: 6px; width: 96px; height: 30px; padding-left: 10px; border-radius: 0 10px 10px 0; background: linear-gradient(#2f7a2f, #5bb85b 12%, #3c983c 40%, #359435 80%, #216b21); box-shadow: inset -3px 0 4px #1d641d; font: italic bold 16px/20px "Liberation Sans", sans-serif; text-shadow: 1px 1px 1px #234; }
.ql { display: flex; align-items: center; gap: 7px; width: 101px; padding-left: 12px; }
.ql span { padding: 0 0 10px 5px; font-size: 15px; color: #cfe0ff; }
.task { display: flex; align-items: center; gap: 4px; flex: 0 1 159px; height: 25px; margin: 2px 1px 0 0; padding-left: 10px; border-radius: 2px; background: linear-gradient(#5e9dfb, #3c80f3 20%, #377bf0 85%, #2a64d4); overflow: hidden; }
.task.on { background: linear-gradient(#123b92, #1d50b8 20%, #1e53bf); }
.lang { display: flex; align-items: center; gap: 10px; margin-left: auto; padding-right: 37px; }
.lang span { padding: 2px 1px; background: #2e66c6; margin-right: -3px; }
.lang svg:last-child { margin-left: 1px; }
.clock { display: flex; align-items: center; width: 75px; height: 30px; background: linear-gradient(#1580d5, #2bb4f5 8%, #1291ea 25%, #1290e8 85%, #0b6cc0); border-left: 1px solid #0b4fa8; }
.clock button { margin: 0 2px 0 -10px; }
.clock time { margin-left: 6px; }
</style>
